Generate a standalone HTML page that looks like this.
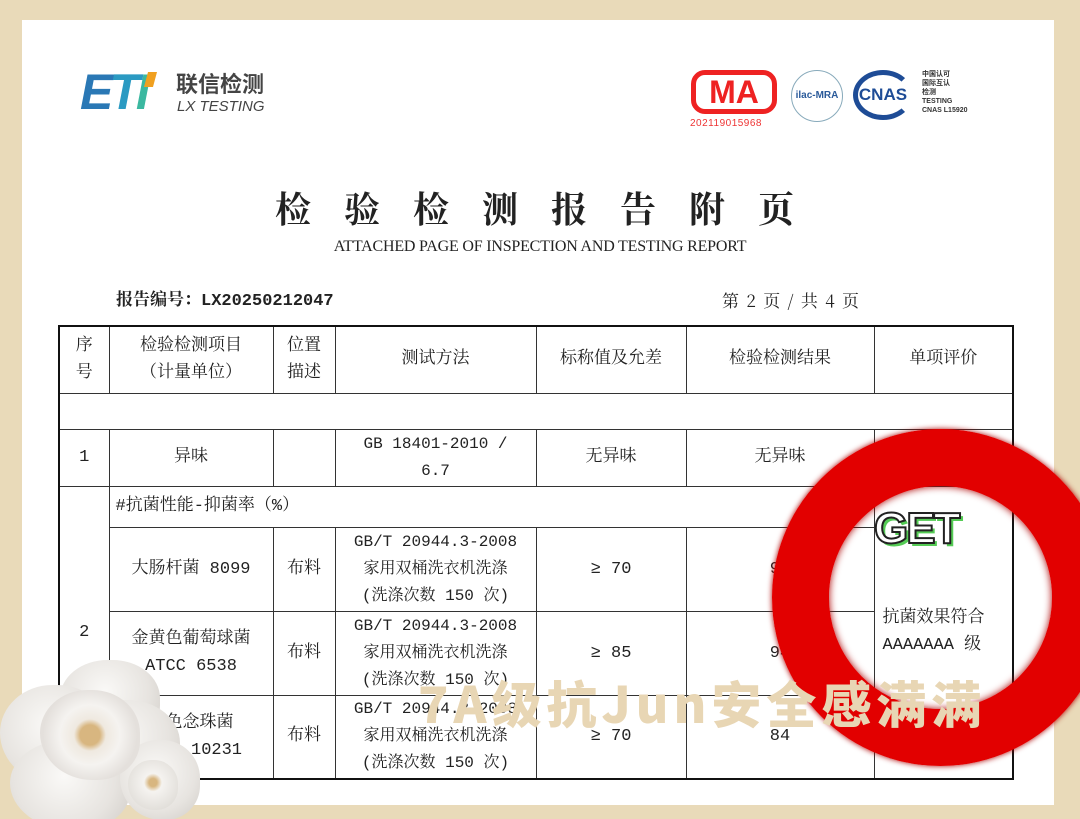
<!DOCTYPE html>
<html><head><meta charset="utf-8"><style>
*{margin:0;padding:0;box-sizing:border-box}
html{width:1080px;height:819px;overflow:hidden}
body{width:1080px;height:819px;background:#e9dab9;position:relative;overflow:hidden;font-family:"Liberation Serif","Noto Serif CJK SC",serif;color:#222}
.panel{position:absolute;left:22px;top:20px;width:1032px;height:785px;background:#fff}
.abs{position:absolute}
table{position:absolute;left:58px;top:325px;width:954px;border-collapse:collapse;border:2.5px solid #111;font-size:17px;text-align:center;font-family:"Liberation Mono","Noto Serif CJK SC",serif;table-layout:fixed}
td{border:1px solid #333;line-height:27px;overflow:hidden;white-space:nowrap}
.m{font-size:16px}
.pet{position:absolute;border-radius:50% 50% 45% 55%;background:radial-gradient(circle at 45% 40%,#faf9f7,#e7e4e0 60%,#cfcbc6)}
</style></head><body>
<div class="panel"></div>
<!-- logo -->
<div class="abs" style="left:80px;top:66px;font:italic bold 50px 'Liberation Sans',sans-serif;letter-spacing:-4px;line-height:52px">
<span style="color:#2a78b5">E</span><span style="color:#2b9ac2">T</span><span style="color:#3bb8a0">I</span></div>
<div class="abs" style="left:146px;top:72px;width:9px;height:15px;background:#f0a020;transform:skewX(-15deg)"></div>
<div class="abs" style="left:176px;top:70px;font:bold 22px/26px 'Noto Sans CJK SC',sans-serif;color:#444">联信检测</div>
<div class="abs" style="left:177px;top:98px;font:italic 15px 'Liberation Sans',sans-serif;color:#444">LX TESTING</div>
<!-- badges -->
<div class="abs" style="left:691px;top:70px;width:86px;height:44px;border:5px solid #e22;border-radius:14px;font:bold 32px 'Liberation Sans',sans-serif;color:#e22;text-align:center;line-height:34px">MA</div>
<div class="abs" style="left:690px;top:118px;font:10px 'Liberation Sans',sans-serif;color:#e33;letter-spacing:0.5px">202119015968</div>
<div class="abs" style="left:791px;top:70px;width:52px;height:52px;border:1px solid #8ab;border-radius:50%;font:bold 10px 'Liberation Sans',sans-serif;color:#2a5a9a;text-align:center;line-height:50px">ilac-MRA</div>
<div class="abs" style="left:853px;top:70px;width:60px;height:50px;border:5px solid #1e4c96;border-radius:50%;border-right-color:transparent;font:bold 17px 'Liberation Sans',sans-serif;color:#1e4c96;line-height:40px;text-align:center">CNAS</div>
<div class="abs" style="left:922px;top:70px;font:bold 7px/9px 'Liberation Sans','Noto Sans CJK SC',sans-serif;color:#333">中国认可<br>国际互认<br>检测<br>TESTING<br>CNAS L15920</div>
<!-- title -->
<div class="abs" style="left:275px;top:186px;white-space:nowrap;font:bold 36px/44px 'Noto Serif CJK SC',serif;letter-spacing:33px">检验检测报告附页</div>
<div class="abs" style="left:0;width:1080px;top:238px;text-align:center;font:16px 'Liberation Serif',serif;color:#222;letter-spacing:-0.2px">ATTACHED PAGE OF INSPECTION AND TESTING REPORT</div>
<div class="abs" style="left:116px;top:285px;font:bold 17px 'Liberation Mono','Noto Serif CJK SC',serif">报告编号：LX20250212047</div>
<div class="abs" style="left:722px;top:287px;font:17px 'Noto Serif CJK SC',serif;word-spacing:3px">第 2 页 / 共 4 页</div>
<table>
<colgroup><col style="width:50px"><col style="width:164px"><col style="width:62px"><col style="width:201px"><col style="width:150px"><col style="width:188px"><col style="width:139px"></colgroup>
<tr style="height:67px"><td>序<br>号</td><td>检验检测项目<br>（计量单位）</td><td>位置<br>描述</td><td>测试方法</td><td>标称值及允差</td><td>检验检测结果</td><td>单项评价</td></tr>
<tr style="height:36px"><td colspan="7"></td></tr>
<tr style="height:57px"><td>1</td><td>异味</td><td></td><td class="m">GB 18401-2010 /<br>6.7</td><td>无异味</td><td>无异味</td><td></td></tr>
<tr style="height:41px"><td rowspan="4">2</td><td colspan="5" style="text-align:left;padding-left:6px">#抗菌性能-抑菌率（%）</td><td rowspan="4" style="text-align:left;padding-left:8px;vertical-align:middle;white-space:normal">抗菌效果符合<br>AAAAAAA 级</td></tr>
<tr style="height:84px"><td>大肠杆菌 8099</td><td>布料</td><td class="m">GB/T 20944.3-2008<br>家用双桶洗衣机洗涤<br>(洗涤次数 150 次)</td><td>≥ 70</td><td>99</td></tr>
<tr style="height:84px"><td>金黄色葡萄球菌<br>ATCC 6538</td><td>布料</td><td class="m">GB/T 20944.3-2008<br>家用双桶洗衣机洗涤<br>(洗涤次数 150 次)</td><td>≥ 85</td><td>94</td></tr>
<tr style="height:84px"><td>白色念珠菌<br>ATCC 10231</td><td>布料</td><td class="m">GB/T 20944.3-2008<br>家用双桶洗衣机洗涤<br>(洗涤次数 150 次)</td><td>≥ 70</td><td>84</td></tr>
</table>
<!-- ring -->
<div class="abs" style="left:772px;top:429px;width:337px;height:337px;border-radius:50%;border:57px solid #e20000;box-shadow:0 0 6px #a00, inset 0 0 8px #a00"></div>
<div class="abs" style="left:874px;top:504px;font:bold 44px 'Liberation Sans',sans-serif;color:#fff;-webkit-text-stroke:2px #222;text-shadow:3px 3px 0 #5c5;letter-spacing:-2px">GET</div>
<div class="abs" style="left:418px;top:674px;white-space:nowrap;font:900 50px/56px 'Noto Sans CJK SC',sans-serif;color:#e8d6b4;letter-spacing:5px">7A级抗Jun安全感满满</div>
<!-- flower -->
<div class="abs" style="left:0;top:640px;width:200px;height:179px;overflow:hidden">
<div class="pet" style="left:60px;top:20px;width:100px;height:80px"></div>
<div class="pet" style="left:0;top:45px;width:110px;height:100px"></div>
<div class="pet" style="left:70px;top:60px;width:110px;height:90px"></div>
<div class="pet" style="left:10px;top:100px;width:120px;height:90px"></div>
<div class="pet" style="left:120px;top:100px;width:80px;height:80px"></div>
<div class="pet" style="left:40px;top:50px;width:100px;height:90px;background:radial-gradient(circle at 50% 50%,#d8b680 0 10px,#efe9e0 16px,#f5f3f0 30px,#e4e0dc 70%)"></div>
<div class="pet" style="left:128px;top:120px;width:50px;height:50px;background:radial-gradient(circle at 50% 45%,#d8b680 0 4px,#f5f3f0 9px,#e0ddd8 80%)"></div>
</div>
</body></html>
